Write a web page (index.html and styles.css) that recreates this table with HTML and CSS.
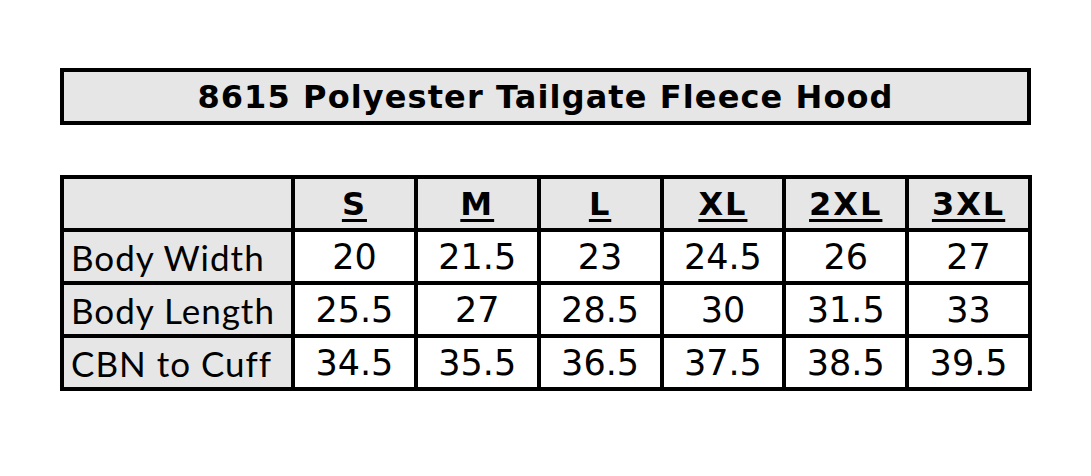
FILE: index.html
```html
<!DOCTYPE html>
<html lang="en">
<head>
<meta charset="utf-8">
<title>8615 Polyester Tailgate Fleece Hood</title>
<link rel="stylesheet" href="styles.css">
</head>
<body>
<main class="page">
  <h1 class="title">8615 Polyester Tailgate Fleece Hood</h1>
  <div class="chart">
    <div class="cell corner"></div>
    <div class="cell head"><span>S</span></div>
    <div class="cell head"><span>M</span></div>
    <div class="cell head"><span>L</span></div>
    <div class="cell head"><span>XL</span></div>
    <div class="cell head"><span>2XL</span></div>
    <div class="cell head"><span>3XL</span></div>

    <div class="cell label">Body Width</div>
    <div class="cell val">20</div>
    <div class="cell val">21.5</div>
    <div class="cell val">23</div>
    <div class="cell val">24.5</div>
    <div class="cell val">26</div>
    <div class="cell val">27</div>

    <div class="cell label">Body Length</div>
    <div class="cell val">25.5</div>
    <div class="cell val">27</div>
    <div class="cell val">28.5</div>
    <div class="cell val">30</div>
    <div class="cell val">31.5</div>
    <div class="cell val">33</div>

    <div class="cell label">CBN to Cuff</div>
    <div class="cell val">34.5</div>
    <div class="cell val">35.5</div>
    <div class="cell val">36.5</div>
    <div class="cell val">37.5</div>
    <div class="cell val">38.5</div>
    <div class="cell val">39.5</div>
  </div>
</main>
</body>
</html>
```

FILE: styles.css
```css
html, body {
  margin: 0;
  padding: 0;
  background: #ffffff;
}

.page {
  padding: 68px 0 0 60px;
  display: flex;
  flex-direction: column;
  gap: 50px;
}

.title {
  box-sizing: border-box;
  width: 971px;
  height: 57px;
  margin: 0;
  border: 4px solid #000;
  background: #e6e6e6;
  display: flex;
  align-items: center;
  justify-content: center;
  font-family: "DejaVu Sans", Verdana, sans-serif;
  font-weight: bold;
  font-size: 32px;
  letter-spacing: 1.1px;
  color: #000;
}

.chart {
  box-sizing: border-box;
  width: 972px;
  display: grid;
  grid-template-columns: 227px repeat(6, 1fr);
  grid-auto-rows: 49px;
  gap: 4px;
  padding: 4px;
  background: #000;
}

.cell {
  display: flex;
  align-items: center;
  justify-content: center;
  background: #ffffff;
  color: #000;
}

.corner,
.head,
.label {
  background: #e6e6e6;
}

.head {
  font-family: "DejaVu Sans", Verdana, sans-serif;
  font-weight: bold;
  font-size: 32px;
}

.head span {
  letter-spacing: 2px;
  text-decoration: underline;
  text-decoration-thickness: 3px;
  text-underline-offset: 4px;
}

.label {
  justify-content: flex-start;
  padding-left: 7px;
  font-family: Lato, "Open Sans", sans-serif;
  font-size: 35px;
  letter-spacing: 1px;
}

.val {
  font-family: "DejaVu Sans", Verdana, sans-serif;
  font-size: 35px;
}
```
